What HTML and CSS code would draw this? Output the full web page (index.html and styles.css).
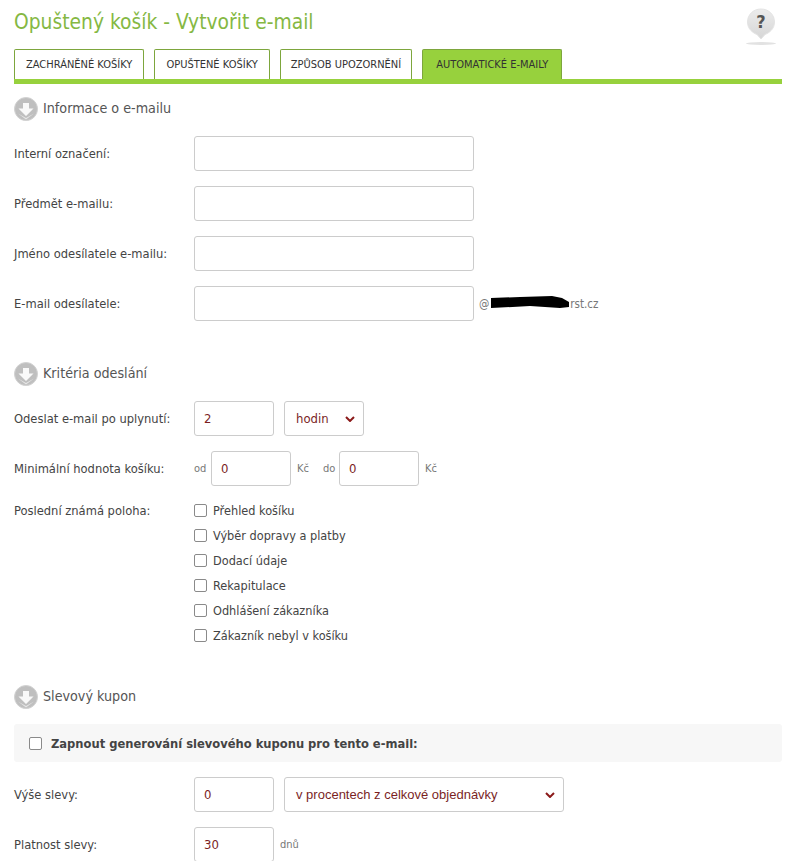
FILE: index.html
```html
<!DOCTYPE html>
<html lang="cs">
<head>
    <meta charset="UTF-8">
    <meta name="viewport" content="width=device-width, initial-scale=1.0">
    <title>Opuštený košík - Vytvořit e-mail</title>
    <link rel="stylesheet" href="styles.css">
</head>
<body>
    <svg class="sprites" width="0" height="0" aria-hidden="true">
        <defs>
            <linearGradient id="help-fill" x1="0" y1="0" x2="0" y2="1">
                <stop offset="0" stop-color="#ececec"/>
                <stop offset="1" stop-color="#d6d6d6"/>
            </linearGradient>
            <symbol id="arrow-icon" viewBox="0 0 24 24">
                <circle cx="12" cy="12" r="11.500" fill="#bfbfbf" stroke="#d2d2d2"/>
                <path d="M9 6h6v5.500h4.500L12 19 4.500 11.500H9z" fill="#f9f9f9"/>
                <path d="M4 16.500l8 6 8-6-8 4.500z" fill="#e6e6e6"/>
            </symbol>
        </defs>
    </svg>

    <div class="page-head">
        <h1 class="page-title">Opuštený košík - Vytvořit e-mail</h1>
        <svg class="help-icon" width="32" height="38" viewBox="0 0 32 38">
            <ellipse cx="16" cy="35.500" rx="15" ry="1.500" fill="#e2e2e2"/>
            <path d="M16 1C8 1 2.500 7 2.500 14 2.500 21 8 25 12 26.500L16 31l4-4.500C24 25 29.500 21 29.500 14 29.500 7 24 1 16 1z" fill="url(#help-fill)" stroke="#e4e4e4"/>
            <text x="16" y="20" text-anchor="middle" class="help-mark">?</text>
        </svg>
    </div>

    <!-- tabs -->
    <div class="tabs">
        <a class="tab">ZACHRÁNĚNÉ KOŠÍKY</a>
        <a class="tab">OPUŠTENÉ KOŠÍKY</a>
        <a class="tab tab-narrow">ZPŮSOB UPOZORNĚNÍ</a>
        <a class="tab tab-active">AUTOMATICKÉ E-MAILY</a>
    </div>

    <!-- Informace o e-mailu -->
    <h2 class="section-title section-first"><svg class="section-icon"><use href="#arrow-icon"/></svg>Informace o e-mailu</h2>
    <div class="row">
        <label class="row-label">Interní označení:</label>
        <input class="field field-wide" type="text">
    </div>
    <div class="row">
        <label class="row-label">Předmět e-mailu:</label>
        <input class="field field-wide" type="text">
    </div>
    <div class="row">
        <label class="row-label">Jméno odesílatele e-mailu:</label>
        <input class="field field-wide" type="text">
    </div>
    <div class="row">
        <label class="row-label">E-mail odesílatele:</label>
        <input class="field field-wide" type="text">
        <span class="domain">@<svg class="redacted" width="80" height="14" viewBox="0 0 80 14"><path d="M1 2L30 1 62 0 72 2 79 6 79 11 70 12 40 10 1 12z" fill="black"/></svg>rst.cz</span>
    </div>

    <!-- Kritéria odeslání -->
    <h2 class="section-title section-second"><svg class="section-icon"><use href="#arrow-icon"/></svg>Kritéria odeslání</h2>
    <div class="row">
        <label class="row-label">Odeslat e-mail po uplynutí:</label>
        <input class="field field-small" type="text" value="2">
        <span class="select select-hours">hodin<svg class="select-arrow" width="10" height="6" viewBox="0 0 10 6"><path d="M1 1l4 4 4-4" fill="none" stroke="#8b1a1a" stroke-width="2"/></svg></span>
    </div>
    <div class="row">
        <label class="row-label">Minimální hodnota košíku:</label>
        <span class="unit unit-from">od</span>
        <input class="field field-small" type="text" value="0">
        <span class="unit unit-cur">Kč</span>
        <span class="unit unit-to">do</span>
        <input class="field field-small" type="text" value="0">
        <span class="unit unit-cur">Kč</span>
    </div>
    <div class="row row-checks">
        <label class="row-label">Poslední známá poloha:</label>
        <div class="checks">
            <label class="check"><input type="checkbox">Přehled košíku</label>
            <label class="check"><input type="checkbox">Výběr dopravy a platby</label>
            <label class="check"><input type="checkbox">Dodací údaje</label>
            <label class="check"><input type="checkbox">Rekapitulace</label>
            <label class="check"><input type="checkbox">Odhlášení zákazníka</label>
            <label class="check"><input type="checkbox">Zákazník nebyl v košíku</label>
        </div>
    </div>

    <!-- Slevový kupon -->
    <h2 class="section-title section-third"><svg class="section-icon"><use href="#arrow-icon"/></svg>Slevový kupon</h2>
    <label class="coupon-bar"><input type="checkbox">Zapnout generování slevového kuponu pro tento e-mail:</label>
    <div class="row">
        <label class="row-label">Výše slevy:</label>
        <input class="field field-small" type="text" value="0">
        <span class="select select-type">v procentech z celkové objednávky<svg class="select-arrow" width="10" height="6" viewBox="0 0 10 6"><path d="M1 1l4 4 4-4" fill="none" stroke="#8b1a1a" stroke-width="2"/></svg></span>
    </div>
    <div class="row">
        <label class="row-label">Platnost slevy:</label>
        <input class="field field-small" type="text" value="30">
        <span class="unit unit-days">dnů</span>
    </div>
</body>
</html>
```

FILE: styles.css
```css
html {
    overflow: hidden;
}

body {
    font-family: "DejaVu Sans Condensed", "DejaVu Sans", sans-serif;
    font-size: 12.8px;
    color: #444;
    background-color: white;
    margin: 0;
    padding: 0 7px 0 14px;
}

.sprites {
    display: block;
}

.page-head {
    display: flex;
    justify-content: space-between;
    align-items: flex-start;
    height: 49px;
}

.page-title {
    margin: 7px 0 0;
    font-size: 20.8px;
    font-weight: normal;
    line-height: 30px;
    color: #85b843;
}

.help-icon {
    margin: 8px 5px 0 0;
}

.help-mark {
    font-size: 18px;
    font-weight: bold;
    fill: #555;
}

.tabs {
    display: flex;
    gap: 10px;
    height: 30px;
    border-bottom: 5px solid #97d13d;
}

.tab {
    display: flex;
    align-items: center;
    padding: 0 11px;
    font-size: 11px;
    color: #333;
    border: 1px solid #7da63d;
    border-bottom: none;
    border-radius: 2px 2px 0 0;
}

.tab-narrow {
    padding: 0 10px;
}

.tab-active {
    background-color: #97d13d;
    padding: 0 13px;
}

.section-title {
    display: flex;
    align-items: center;
    gap: 5px;
    height: 24px;
    margin: 0;
    font-size: 14.2px;
    font-weight: normal;
    color: #555;
}

.section-first {
    margin: 12px 0 16px;
}

.section-second {
    margin: 40px 0 16px;
}

.section-third {
    margin: 39px 0 16px;
}

.section-icon {
    width: 24px;
    height: 24px;
    flex: none;
    margin-top: 2px;
}

.row {
    display: flex;
    align-items: center;
    height: 35px;
    margin-bottom: 15px;
}

.row-label {
    width: 180px;
    flex: none;
}

.field,
.select {
    box-sizing: border-box;
    height: 35px;
    border: 1px solid #ccc;
    border-radius: 3px;
    background-color: white;
    color: #7b1f1f;
    font-family: "DejaVu Sans Condensed", "DejaVu Sans", sans-serif;
    font-size: 13px;
}

.field {
    padding: 0 9px;
}

.field-wide {
    width: 280px;
}

.field-small {
    width: 80px;
}

.select {
    display: flex;
    align-items: center;
    justify-content: space-between;
    margin-left: 10px;
    padding: 0 8px 0 11px;
}

.select-hours {
    width: 80px;
}

.select-type {
    width: 280px;
    font-family: "Liberation Sans", sans-serif;
    font-size: 13px;
}

.domain {
    display: flex;
    align-items: center;
    margin-left: 5px;
    font-size: 11.5px;
    color: #777;
}

.redacted {
    margin: -1px 0 0 1px;
}

.unit {
    font-size: 11px;
    color: #777;
}

.unit-from {
    width: 17px;
}

.unit-cur {
    margin-left: 6px;
}

.unit-to {
    width: 12px;
    margin: 0 4px 0 14px;
}

.unit-days {
    margin-left: 6px;
}

.row-checks {
    align-items: flex-start;
    height: auto;
    margin-bottom: 0;
}

.row-checks .row-label {
    line-height: 20px;
}

.checks {
    display: flex;
    flex-direction: column;
    gap: 5px;
    margin-top: -1px;
    font-size: 12.6px;
}

.check {
    display: flex;
    align-items: center;
    height: 20px;
}

.check input,
.coupon-bar input {
    appearance: none;
    box-sizing: border-box;
    width: 13px;
    height: 13px;
    margin: 0 6px 0 0;
    background-color: white;
    border: 1px solid #8a8a8a;
    border-radius: 2px;
}

.coupon-bar {
    display: flex;
    align-items: center;
    height: 38px;
    margin-bottom: 15px;
    padding-left: 15px;
    font-size: 12.8px;
    font-weight: bold;
    background-color: #f7f7f7;
    border-radius: 3px;
}

.coupon-bar input {
    margin: 0 9px 0 0;
}
```
